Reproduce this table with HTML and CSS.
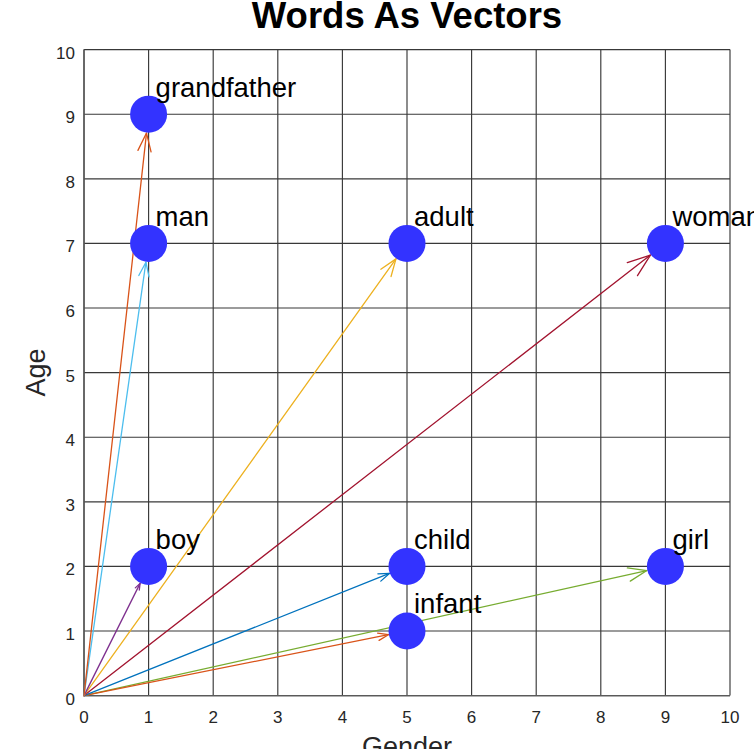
FILE: index.html
```html
<!DOCTYPE html>
<html lang="en">
<head>
<meta charset="utf-8">
<title>Words As Vectors</title>
<link rel="stylesheet" href="styles.css">
</head>
<body>
<figure class="figure">
  <h1 class="title">Words As Vectors</h1>
  <svg class="plot" width="754" height="715" viewBox="0 34 754 715" xmlns="http://www.w3.org/2000/svg">
    <g class="grid">
      <line x1="84" y1="49.6" x2="84" y2="695.6"/>
      <line x1="148.6" y1="49.6" x2="148.6" y2="695.6"/>
      <line x1="213.2" y1="49.6" x2="213.2" y2="695.6"/>
      <line x1="277.8" y1="49.6" x2="277.8" y2="695.6"/>
      <line x1="342.4" y1="49.6" x2="342.4" y2="695.6"/>
      <line x1="407" y1="49.6" x2="407" y2="695.6"/>
      <line x1="471.6" y1="49.6" x2="471.6" y2="695.6"/>
      <line x1="536.2" y1="49.6" x2="536.2" y2="695.6"/>
      <line x1="600.8" y1="49.6" x2="600.8" y2="695.6"/>
      <line x1="665.4" y1="49.6" x2="665.4" y2="695.6"/>
      <line x1="730" y1="49.6" x2="730" y2="695.6"/>
      <line x1="84" y1="695.6" x2="730" y2="695.6"/>
      <line x1="84" y1="631" x2="730" y2="631"/>
      <line x1="84" y1="566.4" x2="730" y2="566.4"/>
      <line x1="84" y1="501.8" x2="730" y2="501.8"/>
      <line x1="84" y1="437.2" x2="730" y2="437.2"/>
      <line x1="84" y1="372.6" x2="730" y2="372.6"/>
      <line x1="84" y1="308" x2="730" y2="308"/>
      <line x1="84" y1="243.4" x2="730" y2="243.4"/>
      <line x1="84" y1="178.8" x2="730" y2="178.8"/>
      <line x1="84" y1="114.2" x2="730" y2="114.2"/>
      <line x1="84" y1="49.6" x2="730" y2="49.6"/>
    </g>
    <g class="frame">
      <line x1="84" y1="49.6" x2="84" y2="695.6"/>
      <line x1="84" y1="695.6" x2="730" y2="695.6"/>
    </g>

    <g class="ticks-x">
      <text x="84" y="723">0</text>
      <text x="148.6" y="723">1</text>
      <text x="213.2" y="723">2</text>
      <text x="277.8" y="723">3</text>
      <text x="342.4" y="723">4</text>
      <text x="407" y="723">5</text>
      <text x="471.6" y="723">6</text>
      <text x="536.2" y="723">7</text>
      <text x="600.8" y="723">8</text>
      <text x="665.4" y="723">9</text>
      <text x="730" y="723">10</text>
    </g>
    <g class="ticks-y">
      <text x="75" y="704.6">0</text>
      <text x="75" y="640">1</text>
      <text x="75" y="575.4">2</text>
      <text x="75" y="510.8">3</text>
      <text x="75" y="446.2">4</text>
      <text x="75" y="381.6">5</text>
      <text x="75" y="317">6</text>
      <text x="75" y="252.4">7</text>
      <text x="75" y="187.8">8</text>
      <text x="75" y="123.2">9</text>
      <text x="75" y="58.6">10</text>
    </g>

    <g class="arrow c-green">
      <line x1="84" y1="695.6" x2="646.85" y2="570.52"/>
      <polyline points="627.37,567.97 646.85,570.52 630.28,581.09"/>
    </g>
    <g class="arrow c-orange">
      <line x1="84" y1="695.6" x2="388.37" y2="634.73"/>
      <polyline points="377.62,633.09 388.37,634.73 379.08,640.38"/>
    </g>
    <g class="arrow c-blue">
      <line x1="84" y1="695.6" x2="389.36" y2="573.46"/>
      <polyline points="377.89,573.82 389.36,573.46 380.80,581.11"/>
    </g>
    <g class="arrow c-darkred">
      <line x1="84" y1="695.6" x2="650.41" y2="255.06"/>
      <polyline points="627.27,262.52 650.41,255.06 637.48,275.65"/>
    </g>
    <g class="arrow c-yellow">
      <line x1="84" y1="695.6" x2="395.96" y2="258.86"/>
      <polyline points="380.84,269.24 395.96,258.86 391.05,276.53"/>
    </g>
    <g class="arrow c-purple">
      <line x1="84" y1="695.6" x2="140.10" y2="583.39"/>
      <polyline points="135.30,587.90 140.10,583.39 139.30,590.00"/>
    </g>
    <g class="arrow c-lightblue">
      <line x1="84" y1="695.6" x2="145.91" y2="262.21"/>
      <polyline points="138.81,275.50 145.91,262.21 149.01,276.96"/>
    </g>
    <g class="arrow c-orange">
      <line x1="84" y1="695.6" x2="146.50" y2="133.08"/>
      <polyline points="137.94,150.38 146.50,133.08 151.06,151.83"/>
    </g>

    <g class="points">
      <circle cx="148.6" cy="114.2" r="18.5"/>
      <circle cx="148.6" cy="243.4" r="18.5"/>
      <circle cx="407" cy="243.4" r="18.5"/>
      <circle cx="665.4" cy="243.4" r="18.5"/>
      <circle cx="148.6" cy="566.4" r="18.5"/>
      <circle cx="407" cy="566.4" r="18.5"/>
      <circle cx="407" cy="631" r="18.5"/>
      <circle cx="665.4" cy="566.4" r="18.5"/>
    </g>

    <g class="labels">
      <text x="155.6" y="96.5">grandfather</text>
      <text x="155.6" y="225.7">man</text>
      <text x="414" y="225.7">adult</text>
      <text x="672.4" y="225.7">woman</text>
      <text x="155.6" y="548.7">boy</text>
      <text x="414" y="548.7">child</text>
      <text x="414" y="613.3">infant</text>
      <text x="672.4" y="548.7">girl</text>
    </g>

    <text class="axis-label" x="407" y="756">Gender</text>
    <text class="axis-label" transform="translate(45 372.6) rotate(-90)">Age</text>
  </svg>
</figure>
</body>
</html>
```

FILE: styles.css
```css
html, body {
  margin: 0;
  padding: 0;
  background: #ffffff;
}

.figure {
  margin: 0;
  width: 754px;
  height: 749px;
  overflow: hidden;
  font-family: "Liberation Sans", Arial, sans-serif;
}

.title {
  margin: 0 0 0 60px;
  height: 34px;
  font-size: 36.5px;
  line-height: 32px;
  font-weight: bold;
  text-align: center;
  color: #000000;
}

.plot {
  display: block;
}

.grid line {
  stroke: #383838;
  stroke-width: 1.15;
}

.frame line {
  stroke: #5a5a5a;
  stroke-width: 1.4;
}

.ticks-x text,
.ticks-y text {
  font-family: "Liberation Sans", Arial, sans-serif;
  font-size: 17px;
  fill: #262626;
}

.ticks-x text {
  text-anchor: middle;
}

.ticks-y text {
  text-anchor: end;
}

.arrow line,
.arrow polyline {
  fill: none;
  stroke-width: 1.3;
  stroke-linecap: round;
  stroke-linejoin: round;
}

.c-blue { stroke: #0072bd; }
.c-orange { stroke: #d95319; }
.c-yellow { stroke: #edb120; }
.c-purple { stroke: #7e2f8e; }
.c-green { stroke: #77ac30; }
.c-lightblue { stroke: #4dbeee; }
.c-darkred { stroke: #a2142f; }

.points circle {
  fill: #3333ff;
}

.labels text {
  font-family: "Liberation Sans", Arial, sans-serif;
  font-size: 27.5px;
  fill: #000000;
}

.axis-label {
  font-family: "Liberation Sans", Arial, sans-serif;
  font-size: 27px;
  text-anchor: middle;
  fill: #262626;
}
```
